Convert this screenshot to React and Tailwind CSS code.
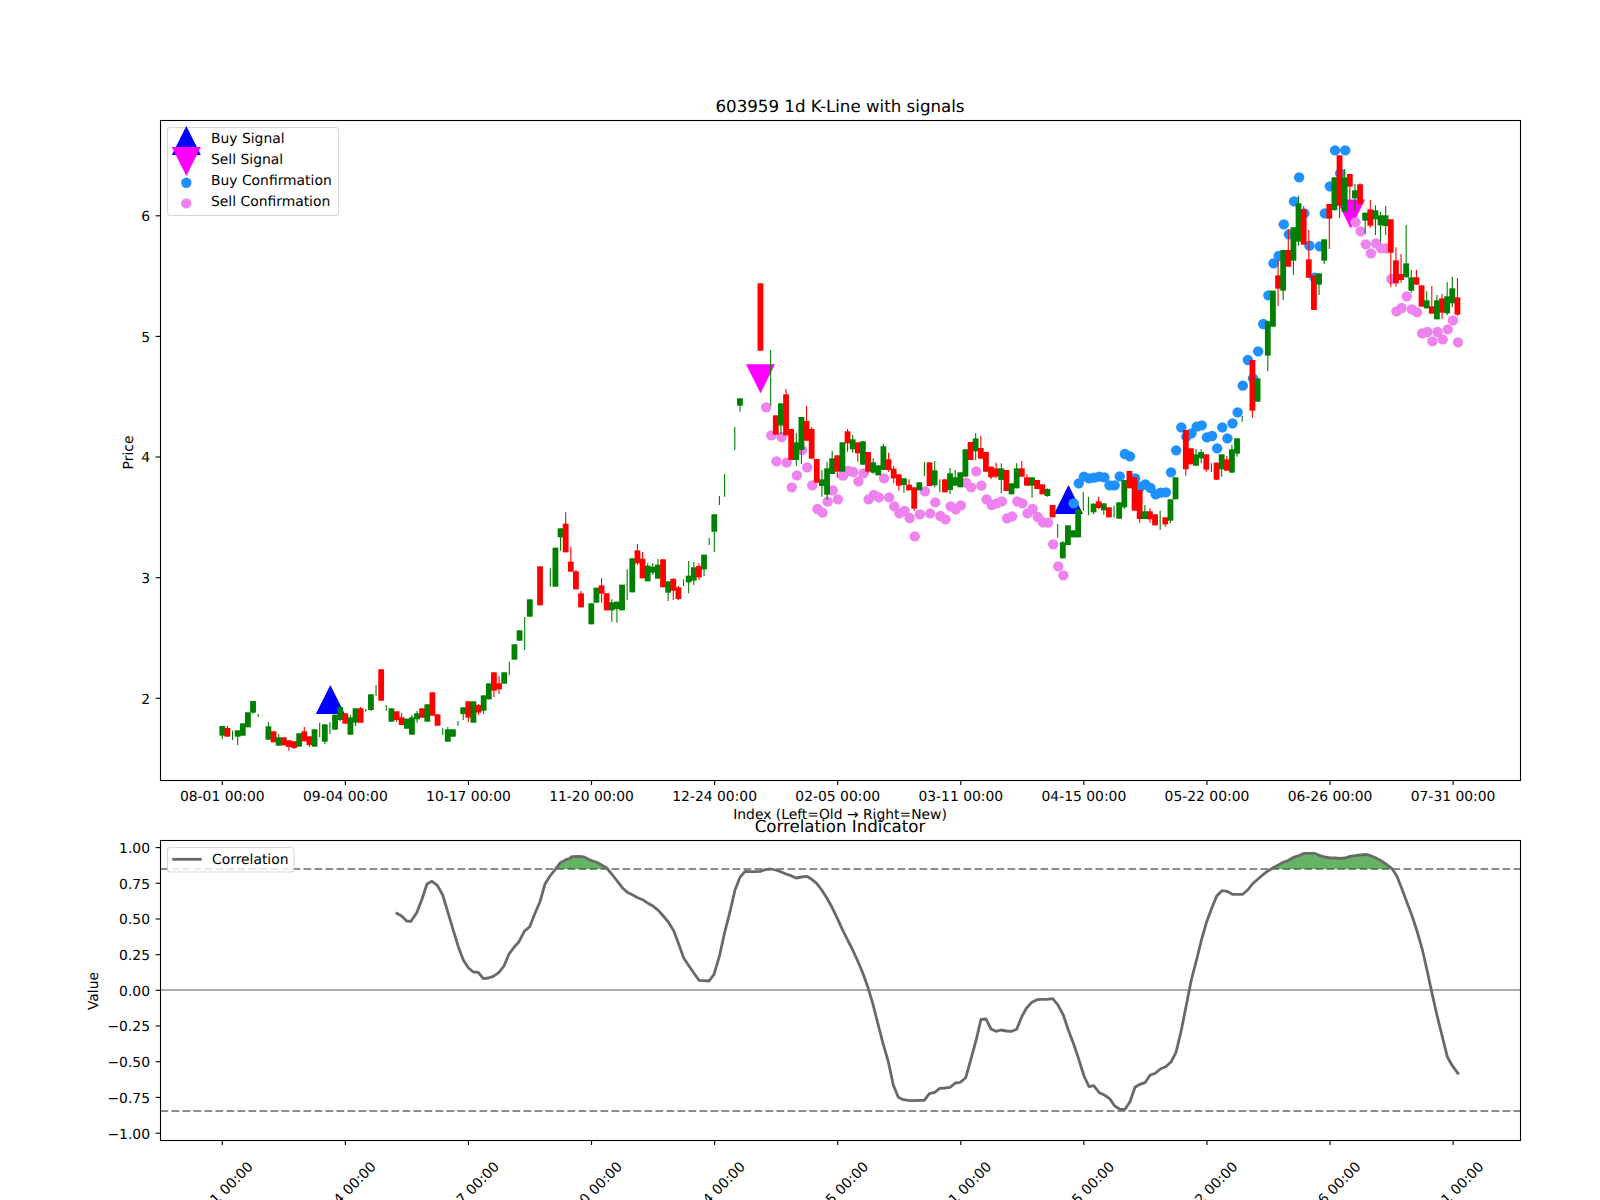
const X0 = 222.3;
const STEP = 5.125;
const bx = (i) => X0 + STEP * i;

// candle rows: [index, colour, bodyTop, bodyBottom, wickTop, wickBottom] in 3x crop units; 0 = none
const C2 = [[0,'g',738,767,0,777],[1,'r',744,770,738,0],[2,'g',0,0,752,780],[3,'g',751,770,0,795],[4,'g',730,767,0,0],[5,'g',697,742,0,0],[6,'g',663,698,0,702],[7,'g',0,0,702,711],[9,'g',739,779,726,0],[10,'r',754,787,0,0],[11,'g',772,797,762,0],[12,'r',772,796,0,0],[13,'r',781,801,0,812],[14,'r',784,804,0,807],[15,'g',760,800,0,0],[16,'r',754,784,741,0],[17,'r',769,795,0,801],[18,'g',748,800,0,0],[19,'g',0,0,728,772],[20,'g',733,785,0,792],[21,'g',0,0,726,762],[22,'g',704,749,0,0],[23,'g',681,720,0,724],[24,'r',700,731,0,0],[25,'g',712,764,705,0],[26,'g',685,728,0,738],[27,'r',685,728,681,0],[28,'g',0,0,687,695],[29,'g',643,690,0,693],[30,'g',0,0,615,648],[31,'r',568,662,0,0],[32,'g',0,0,675,692],[33,'g',685,725,0,0],[34,'r',694,720,0,725],[35,'r',712,735,699,0],[36,'g',716,746,0,0],[37,'g',712,764,705,0],[38,'g',700,718,693,728],[39,'r',685,713,0,0],[40,'g',673,725,0,0],[41,'r',637,707,0,0],[42,'r',703,737,0,0],[43,'g',0,0,743,765],[44,'g',748,785,741,0],[45,'g',748,770,0,0],[46,'g',0,0,723,737],[47,'g',682,702,0,720],[48,'r',664,713,0,726],[49,'g',664,728,0,0],[50,'r',675,698,672,705],[51,'g',646,692,0,702],[52,'g',610,658,0,0],[53,'r',577,632,0,651],[54,'r',610,628,588,642],[55,'g',577,611,0,0],[56,'g',0,0,545,585],[57,'g',493,539,0,0],[58,'g',451,482,0,0],[59,'g',0,0,411,510],[60,'g',358,410,0,0],[62,'r',259,376,0,0],[64,'g',0,0,265,320],[65,'g',203,320,0,0],[66,'g',145,172,0,212],[67,'r',131,217,97,0],[68,'r',245,275,200,0],[69,'r',274,328,270,0],[70,'r',340,382,333,0],[72,'g',370,433,0,0],[73,'g',323,368,0,0],[74,'r',316,341,294,368],[75,'r',340,391,0,0],[76,'g',367,391,358,425],[77,'g',365,387,0,428],[78,'g',314,391,0,0],[79,'g',0,0,268,360],[80,'g',235,337,0,0],[81,'r',211,250,192,254],[82,'r',236,295,216,0],[83,'g',257,304,250,0],[84,'g',260,278,250,285],[85,'g',254,296,237,0],[86,'r',238,322,0,0],[87,'g',304,338,0,363],[88,'r',296,332,0,360],[89,'r',322,357,318,360],[90,'g',0,0,298,318],[91,'g',287,307,243,340],[92,'g',262,302,246,315],[93,'r',258,292,250,300],[94,'g',224,268,0,288],[95,'g',0,0,174,195],[96,'g',103,155,0,216],[97,'g',0,0,48,75]];
const C4 = [[98,'g',0,0,612,680],[100,'g',0,0,470,540],[101,'g',385,407,0,425],[105,'r',40,242,0,0],[107,'g',0,0,240,407],[108,'r',436,494,0,0],[109,'g',400,467,0,493],[110,'r',373,496,357,0],[111,'r',477,570,0,0],[112,'g',517,570,490,588],[113,'g',441,540,0,582],[114,'r',453,512,407,0],[115,'r',477,566,472,0],[116,'r',567,638,0,0],[117,'g',628,648,600,680],[118,'g',595,674,575,690],[119,'g',565,612,543,0],[120,'r',556,605,555,623],[121,'g',517,605,0,0],[122,'r',484,520,477,545],[123,'g',508,538,495,548],[124,'r',517,550,0,575],[125,'g',514,584,512,0],[126,'r',546,605,0,610],[127,'g',577,608,565,612],[128,'g',586,616,0,0],[129,'g',529,600,522,0],[130,'r',568,600,548,605],[131,'r',596,625,587,640],[132,'r',613,647,0,662],[133,'g',625,645,0,668],[134,'r',644,661,628,0],[135,'r',652,716,0,722],[136,'g',637,661,0,0],[137,'g',0,0,575,618],[138,'r',577,648,0,0],[139,'g',601,646,573,652],[140,'g',0,0,628,667],[141,'r',628,667,0,0],[142,'g',610,660,594,672],[143,'g',622,647,600,0],[144,'g',607,652,0,0],[145,'g',538,620,0,0],[146,'r',516,570,516,0],[147,'g',505,544,489,570],[148,'r',534,566,498,0],[149,'r',546,605,0,0],[150,'r',590,622,0,628],[151,'r',595,620,578,625]];
const C5 = [[152,'g',265,300,250,340],[153,'r',270,333,0,0],[154,'g',310,343,0,0],[155,'g',265,325,250,0],[156,'r',265,290,243,0],[157,'r',292,317,283,0],[158,'g',292,317,0,353],[159,'r',300,327,0,0],[160,'r',313,343,0,0],[161,'g',327,348,325,350],[162,'r',375,412,0,0],[163,'g',0,0,432,473],[164,'g',487,535,483,0],[165,'g',436,495,0,0],[166,'g',451,472,0,0],[167,'g',388,472,0,0],[168,'g',0,0,336,393],[169,'g',0,0,350,406],[170,'g',371,397,370,403],[171,'r',364,384,350,388],[172,'g',370,391,0,405],[173,'r',382,412,0,0],[174,'g',0,0,377,413],[175,'g',367,416,0,0],[176,'g',300,382,0,388],[177,'r',273,325,0,0],[178,'r',292,392,0,0],[179,'r',330,417,0,428],[180,'g',394,417,375,0],[181,'r',394,418,385,428],[182,'r',403,436,0,0],[183,'g',0,0,392,450],[184,'r',412,433,0,440],[185,'g',358,422,0,430],[186,'g',292,358,0,0],[188,'r',150,268,0,287],[189,'r',205,253,0,0],[190,'g',223,257,207,0],[191,'g',216,235,208,250],[192,'r',223,269,0,275],[193,'g',0,0,250,276],[194,'r',248,299,0,0],[195,'g',223,268,0,290],[196,'r',238,272,228,0],[197,'g',208,278,195,0],[198,'g',175,221,0,230],[199,'g',0,0,108,125]];
const C6 = [[201,'r',690,842,0,863],[202,'g',745,815,0,0],[204,'g',574,677,0,723],[205,'g',482,590,0,0],[206,'r',436,476,390,528],[207,'g',360,482,0,510],[208,'r',360,410,297,0],[209,'g',292,392,0,435],[210,'g',220,335,197,347],[211,'r',238,344,228,0],[212,'r',388,443,300,0],[213,'r',436,540,0,0],[214,'g',430,464,0,495],[215,'g',328,392,0,402],[216,'r',222,266,0,357],[217,'g',142,240,0,242],[218,'r',76,227,0,264],[219,'g',142,245,117,0],[220,'r',132,170,0,215],[221,'g',181,205,162,243],[222,'r',163,222,160,0],[223,'g',248,272,0,312],[224,'r',238,287,210,293],[225,'g',241,268,226,315],[226,'g',256,286,246,335],[227,'g',256,288,228,315],[228,'r',268,368,0,470],[229,'r',391,460,352,470],[230,'r',432,450,372,458],[231,'g',400,442,285,0],[232,'g',442,482,420,488],[233,'r',442,464,420,0],[234,'r',466,530,0,0],[235,'g',511,535,483,0],[236,'r',529,551,468,0],[237,'g',511,568,495,0],[238,'r',505,548,492,566],[239,'g',499,550,456,556],[240,'g',475,520,440,532],[241,'r',502,554,444,557]];

const toCandles = (rows, y0) => rows.map(([i, c, bt, bb, wt, wb]) => ({
  i, c, bt: y0 + bt / 3, bb: y0 + bb / 3, body: bt > 0,
  wt: y0 + (wt || bt) / 3, wb: y0 + (wb || bb) / 3,
}));
const candles = [...toCandles(C2, 480), ...toCandles(C4, 270), ...toCandles(C5, 380), ...toCandles(C6, 130)];

const BLUE5 = [[166,370],[167,310],[168,290],[169,295],[170,293],[171,290],[172,292],[173,316],[174,316],[175,289],[176,222],[177,229],[178,295],[179,320],[180,313],[181,324],[182,343],[183,338],[184,337],[185,277],[186,211],[187,142],[188,170],[189,160],[190,140],[191,136],[192,172],[193,168],[194,205],[195,142],[196,175],[197,130],[198,97]];
const BLUE6 = [[199,767],[200,690],[201,745],[202,664],[203,582],[204,496],[205,400],[206,378],[207,283],[208,313],[209,214],[210,142],[211,250],[212,347],[213,443],[214,349],[215,250],[216,169],[217,61],[218,130],[219,61]];
const PINK4 = [[106,412],[107,496],[108,574],[109,501],[110,578],[111,652],[112,616],[113,540],[114,592],[115,646],[116,717],[117,728],[118,695],[119,661],[120,688],[121,617],[122,603],[123,606],[124,634],[125,610],[126,688],[127,675],[128,682],[129,625],[130,682],[131,709],[132,730],[133,723],[134,744],[135,799],[136,733],[137,664],[138,730],[139,697],[140,738],[141,748],[142,709],[143,718],[144,706],[145,638],[146,652],[147,604],[148,647],[149,688],[150,705],[151,700],[152,694],[153,745],[154,739],[155,694]];
const PINK5 = [[156,370],[157,400],[158,387],[159,411],[160,427],[161,428],[162,493],[163,559],[164,586]];
const PINK6 = [[221,277],[222,304],[223,343],[224,370],[225,340],[226,355],[227,355],[228,447],[229,544],[230,534],[231,499],[232,538],[233,547],[234,610],[235,606],[236,634],[237,606],[238,628],[239,598],[240,571],[241,637]];
const dots = (rows, y0) => rows.map(([i, y]) => [bx(i) + 0.6, y0 + y / 3]);
const blue = [...dots(BLUE5, 380), ...dots(BLUE6, 130)];
const pink = [...dots(PINK4, 270), ...dots(PINK5, 380), ...dots(PINK6, 130)];

const L7 = [[947,338],[965,348],[980,363],[993,364],[1010,338],[1025,300],[1041,252],[1056,244],[1072,256],[1088,285],[1103,335],[1118,385],[1135,440],[1150,480],[1165,503],[1180,516],[1195,517],[1210,536],[1225,534],[1240,529],[1256,518],[1272,498],[1287,462],[1302,442],[1317,425],[1333,394],[1349,380],[1364,342],[1380,305],[1395,252],[1410,228],[1426,208],[1441,188],[1458,179],[1473,174]];
const L8 = [[33,171],[40,170],[55,169],[72,171],[90,180],[110,187],[125,195],[140,204],[155,222],[170,241],[187,263],[202,277],[218,285],[233,293],[248,299],[264,310],[280,319],[295,331],[310,348],[325,366],[341,392],[356,432],[371,474],[387,498],[402,520],[417,541],[432,542],[447,543],[462,523],[478,470],[493,402],[510,335],[525,270],[540,232],[555,214],[570,215],[586,215],[601,214],[616,209],[632,207],[647,210],[662,215],[678,222],[693,227],[708,234],[724,231],[740,229],[755,238],[770,250],[785,270],[800,293],[816,322],[831,353],[847,388],[862,418],[878,450],[893,483],[908,518],[923,560],[938,610],[954,672],[969,730],[985,785],[1000,855],[1015,892],[1030,899],[1046,901],[1062,902],[1078,901],[1093,901],[1108,881],[1124,877],[1139,865],[1155,864],[1170,862],[1186,849],[1201,847],[1217,833],[1232,780],[1248,722],[1263,658],[1278,657],[1293,687],[1308,694],[1323,690],[1339,693],[1355,694],[1370,688],[1385,650],[1400,623],[1416,607],[1431,599],[1447,598],[1462,598]];
const L9 = [[8,596],[23,614],[40,645],[55,690],[72,735],[87,780],[102,828],[117,860],[131,857],[148,878],[163,885],[179,896],[194,918],[210,928],[225,928],[240,905],[255,862],[270,853],[285,848],[300,826],[316,820],[332,806],[347,800],[363,786],[378,757],[393,695],[408,620],[424,540],[440,478],[455,417],[470,365],[485,325],[500,288],[516,272],[531,274],[547,283],[562,283],[578,283],[593,270],[608,251],[624,237],[639,224],[655,212],[670,203],[685,195],[700,187],[716,181],[731,172],[747,167],[762,160],[778,160],[793,160],[808,166],[824,171],[840,174],[855,174],[870,175],[885,174],[900,169],[916,167],[932,165],[947,163],[962,167],[978,174],[993,182],[1008,192],[1025,205],[1040,227],[1055,265],[1070,305],[1086,347],[1101,393],[1116,445],[1131,510],[1146,580],[1162,650],[1177,710],[1192,770],[1207,797],[1226,823]];
const conv = (rows, x0) => rows.map(([x, y]) => [x0 + x / 3, 800 + y / 3]);
const line = [...conv(L7, 80), ...conv(L8, 560), ...conv(L9, 1050)];
const linePts = line.map((p) => p.map((n) => n.toFixed(1)).join(',')).join(' ');
const Y85 = 869;
const fillPts = `${line[0][0]},${Y85} ${linePts} ${line[line.length - 1][0]},${Y85}`;

const tickX = Array.from({ length: 11 }, (_, k) => X0 + 123.08 * k);
const dates = ['08-01', '09-04', '10-17', '11-20', '12-24', '02-05', '03-11', '04-15', '05-22', '06-26', '07-31'];
const priceTicks = [['2', 698.3], ['3', 577.7], ['4', 457], ['5', 336.4], ['6', 215.8]];
const valueTicks = [['1.00', 847.6], ['0.75', 883.3], ['0.50', 919], ['0.25', 954.7], ['0.00', 990.3], ['\u22120.25', 1026], ['\u22120.50', 1061.7], ['\u22120.75', 1097.4], ['\u22121.00', 1133.2]];

function Tri({ cx, y, down }) {
  const top = down ? y : y + 29;
  const tip = down ? y + 29 : y;
  return <polygon points={`${cx - 14.5},${top} ${cx + 14.5},${top} ${cx},${tip}`} fill={down ? '#ff00ff' : '#0000ff'} />;
}

function YTicks({ ticks }) {
  return ticks.map(([label, y]) => (
    <g key={label}>
      <line x1="155.6" x2="160.5" y1={y} y2={y} stroke="#000" strokeWidth="1.1" />
      <text x="150" y={y + 5.4} textAnchor="end" className="text-[13.89px]">{label}</text>
    </g>
  ));
}

function PriceChart() {
  return (
    <svg viewBox="0 116 1600 691" className="block w-[1600px] h-[691px] shrink-0">
      <Tri cx={330.3} y={685} />
      <Tri cx={1068.5} y={485} />
      <Tri cx={760.5} y={364.2} down />
      <Tri cx={1350.7} y={199.5} down />
      {blue.map(([x, y], n) => <circle key={n} cx={x} cy={y} r="5.2" fill="#1e90ff" />)}
      {pink.map(([x, y], n) => <circle key={n} cx={x} cy={y} r="5.2" fill="#ee82ee" />)}
      {candles.map((c) => {
        const col = c.c === 'g' ? '#008000' : '#ff0000';
        const x = bx(c.i);
        return (
          <g key={c.i}>
            <line x1={x} x2={x} y1={c.wt} y2={c.wb} stroke={col} strokeWidth="1.1" />
            {c.body && <rect x={x - 2.9} y={c.bt} width="5.8" height={c.bb - c.bt} fill={col} />}
          </g>
        );
      })}
      <rect x="160.5" y="120.5" width="1360" height="660" fill="none" stroke="#000" strokeWidth="1.1" />
      <YTicks ticks={priceTicks} />
      {tickX.map((x, k) => (
        <g key={k}>
          <line x1={x} x2={x} y1="780" y2="785" stroke="#000" strokeWidth="1.1" />
          <text x={x} y="801" textAnchor="middle" className="text-[13.89px]">{dates[k]} 00:00</text>
        </g>
      ))}
      <text transform="translate(133 452.5) rotate(-90)" textAnchor="middle" className="text-[13.89px]">Price</text>
      <rect x="167.5" y="127.5" width="171" height="88" rx="3" fill="#fff" fillOpacity="0.8" stroke="#ccc" strokeOpacity="0.8" strokeWidth="1.1" />
      <Tri cx={186.3} y={126} />
      <Tri cx={186.3} y={147} down />
      <circle cx="186.3" cy="182.7" r="5.2" fill="#1e90ff" />
      <circle cx="186.3" cy="203.4" r="5.2" fill="#ee82ee" />
      {[['Buy Signal', 143], ['Sell Signal', 164], ['Buy Confirmation', 185], ['Sell Confirmation', 206]].map(([t, y]) => (
        <text key={t} x="211" y={y} className="text-[13.89px]">{t}</text>
      ))}
    </svg>
  );
}

function CorrChart() {
  return (
    <svg viewBox="0 836 1600 364" className="block w-[1600px] h-[364px] shrink-0">
      <defs>
        <clipPath id="above85"><rect x="160" y="840" width="1360" height={Y85 - 840} /></clipPath>
      </defs>
      <line x1="160.5" x2="1520" y1="990" y2="990" stroke="#a9a9a9" strokeWidth="2" />
      {[869, 1111].map((y) => (
        <line key={y} x1="160.5" x2="1520" y1={y} y2={y} stroke="#8c8c8c" strokeWidth="2" strokeDasharray="7.7 3.3" />
      ))}
      <polygon points={fillPts} fill="#008000" fillOpacity="0.6" clipPath="url(#above85)" />
      <polyline points={linePts} fill="none" stroke="#696969" strokeWidth="2.8" strokeLinejoin="round" />
      <rect x="160.5" y="840.5" width="1360" height="300" fill="none" stroke="#000" strokeWidth="1.1" />
      <YTicks ticks={valueTicks} />
      {tickX.map((x, k) => (
        <g key={k}>
          <line x1={x} x2={x} y1="1140" y2="1145" stroke="#000" strokeWidth="1.1" />
          <text transform={`translate(${x + 1.5} 1197.5) rotate(-45)`} textAnchor="middle" className="text-[13.89px]">{dates[k]} 00:00</text>
        </g>
      ))}
      <text transform="translate(98 991) rotate(-90)" textAnchor="middle" className="text-[13.89px]">Value</text>
      <rect x="167.5" y="847.5" width="126.5" height="24.5" rx="3" fill="#fff" fillOpacity="0.8" stroke="#ccc" strokeOpacity="0.8" strokeWidth="1.1" />
      <line x1="172.3" x2="201.7" y1="859.3" y2="859.3" stroke="#696969" strokeWidth="2.8" />
      <text x="212" y="864" className="text-[13.89px]">Correlation</text>
    </svg>
  );
}

export default function App() {
  return (
    <div className="w-[1600px] h-[1200px] overflow-hidden bg-white text-black flex flex-col pt-[98px] font-['DejaVu_Sans',sans-serif] [text-rendering:geometricPrecision]">
      <h1 className="pl-[160px] pr-[80px] text-center text-[16.67px] leading-[18px] font-normal shrink-0">603959 1d K-Line with signals</h1>
      <PriceChart />
      <div className="pl-[160px] pr-[80px] text-center text-[13.89px] leading-[16px] shrink-0">Index (Left=Old → Right=New)</div>
      <h2 className="pl-[160px] pr-[80px] -mt-[5px] text-center text-[16.67px] leading-[18px] font-normal shrink-0">Correlation Indicator</h2>
      <CorrChart />
    </div>
  );
}
